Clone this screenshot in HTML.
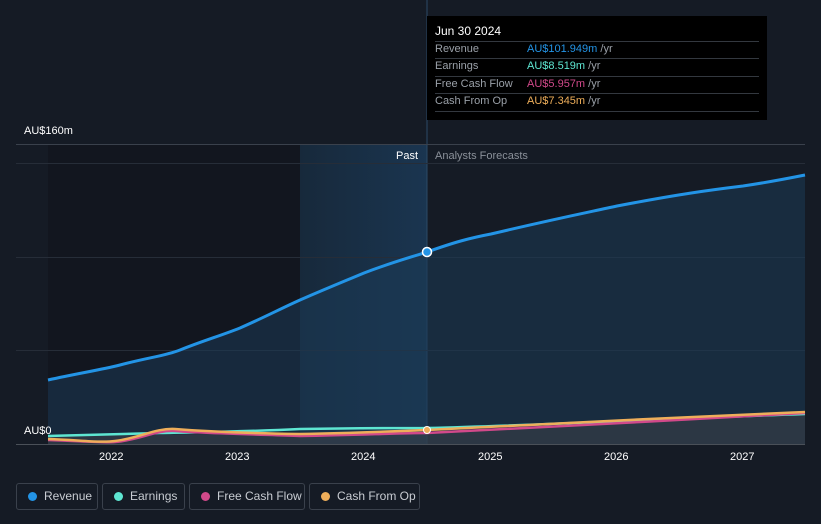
<!DOCTYPE html>
<html><head><style>
body{margin:0;width:821px;height:524px;background:#151b25;font-family:"Liberation Sans",sans-serif;overflow:hidden;position:relative}
.t{position:absolute;font-size:11px;color:#fff}
.leg{position:absolute;top:483px;height:27px;border:1px solid #3a414c;border-radius:3px;box-sizing:border-box;color:#c8ccd2;font-size:12px;line-height:25px;padding-left:27px}
.leg i{position:absolute;left:11px;top:8px;width:9px;height:9px;border-radius:50%}
</style></head><body>
<svg width="821" height="524" style="position:absolute;left:0;top:0">
<defs>
<linearGradient id="pg" x1="0" x2="1"><stop offset="0" stop-color="#17293b"/><stop offset="1" stop-color="#1a3550"/></linearGradient>
</defs>
<rect x="48" y="145" width="252" height="300" fill="#12161f"/>
<rect x="300" y="145" width="127" height="300" fill="url(#pg)"/>
<line x1="427" y1="0" x2="427" y2="445" stroke="#2c4a66" stroke-width="1"/>
<line x1="16" y1="144.5" x2="805" y2="144.5" stroke="#3a414c"/>
<line x1="16" y1="163.5" x2="805" y2="163.5" stroke="#262d38"/>
<line x1="16" y1="257.5" x2="805" y2="257.5" stroke="#262d38"/>
<line x1="16" y1="350.5" x2="805" y2="350.5" stroke="#262d38"/>
<path d="M48,380 C80,373 100,370 120,365 C150,357 165,356 180,350 C205,340 220,336 240,328 C265,317 280,309 300,300 C330,287 345,281 364,273 C390,263 405,259 427,252 C455,242 470,238 491,234 C550,220 580,214 617,206 C680,194 710,190 743,186 C770,182 790,178 805,175 L805,444 L48,444Z" fill="#1b3a56" fill-opacity="0.55"/>
<path d="M48,436 L300,433 L427,432 L805,415 L805,444 L48,444Z" fill="#3a3f47" fill-opacity="0.6"/>
<path d="M48,380 C80,373 100,370 120,365 C150,357 165,356 180,350 C205,340 220,336 240,328 C265,317 280,309 300,300 C330,287 345,281 364,273 C390,263 405,259 427,252 C455,242 470,238 491,234 C550,220 580,214 617,206 C680,194 710,190 743,186 C770,182 790,178 805,175" fill="none" stroke="#2394e6" stroke-width="3"/>
<path d="M48,436 C80,435 110,434 160,433 C200,432 240,432 300,429 C360,428 400,428 427,428 C550,425 680,418 805,414" fill="none" stroke="#5ee6d2" stroke-width="2.5"/>
<path d="M48,440 C80,441 100,443 115,442 C140,440 155,430 175,431 C200,433 240,434 300,436 C360,435 400,433 427,433 C550,427 680,420 805,413" fill="none" stroke="#d1498a" stroke-width="2.5"/>
<path d="M48,439 C80,440 100,443 115,441 C140,438 155,428 175,429 C200,431 240,433 300,434 C360,433 400,431 427,430 C550,424 680,417 805,412" fill="none" stroke="#eeae5a" stroke-width="2.5"/>
<line x1="16" y1="444.5" x2="805" y2="444.5" stroke="#4a5058"/>
<circle cx="427" cy="252" r="4.5" fill="#2394e6" stroke="#fff" stroke-width="1.5"/>
<circle cx="427" cy="430" r="3.5" fill="#eeae5a" stroke="#fff" stroke-width="1"/>
</svg>
<div class="t" style="left:24px;top:125px">AU$160m</div>
<div class="t" style="left:24px;top:425px">AU$0</div>
<div class="t" style="left:396px;top:150px;font-size:11px">Past</div>
<div class="t" style="left:435px;top:150px;color:#8a9099">Analysts Forecasts</div>
<div class="t" style="left:99px;top:451px;font-size:11px">2022</div>
<div class="t" style="left:225px;top:451px">2023</div>
<div class="t" style="left:351px;top:451px">2024</div>
<div class="t" style="left:478px;top:451px">2025</div>
<div class="t" style="left:604px;top:451px">2026</div>
<div class="t" style="left:730px;top:451px">2027</div>
<div style="position:absolute;left:427px;top:16px;width:340px;height:104px;background:#000;font-size:11px;color:#9aa0a8">
<div style="position:absolute;left:8px;top:8px;color:#fff;font-size:12px">Jun 30 2024</div>
<div style="position:absolute;left:8px;right:8px;top:25px;border-top:1px solid #33383f"></div>
<div style="position:absolute;left:8px;right:8px;top:42px;border-top:1px solid #33383f"></div>
<div style="position:absolute;left:8px;right:8px;top:60px;border-top:1px solid #33383f"></div>
<div style="position:absolute;left:8px;right:8px;top:77px;border-top:1px solid #33383f"></div>
<div style="position:absolute;left:8px;right:8px;top:95px;border-top:1px solid #33383f"></div>
<div style="position:absolute;left:8px;top:27px">Revenue</div><div style="position:absolute;left:100px;top:27px"><span style="color:#2394e6">AU$101.949m</span> /yr</div>
<div style="position:absolute;left:8px;top:44px">Earnings</div><div style="position:absolute;left:100px;top:44px"><span style="color:#5ee6d2">AU$8.519m</span> /yr</div>
<div style="position:absolute;left:8px;top:62px">Free Cash Flow</div><div style="position:absolute;left:100px;top:62px"><span style="color:#d1498a">AU$5.957m</span> /yr</div>
<div style="position:absolute;left:8px;top:79px">Cash From Op</div><div style="position:absolute;left:100px;top:79px"><span style="color:#eeae5a">AU$7.345m</span> /yr</div>
</div>
<div class="leg" style="left:16px;width:82px"><i style="background:#2394e6"></i>Revenue</div>
<div class="leg" style="left:102px;width:83px"><i style="background:#5ee6d2"></i>Earnings</div>
<div class="leg" style="left:189px;width:116px"><i style="background:#d1498a"></i>Free Cash Flow</div>
<div class="leg" style="left:309px;width:111px"><i style="background:#eeae5a"></i>Cash From Op</div>
</body></html>
